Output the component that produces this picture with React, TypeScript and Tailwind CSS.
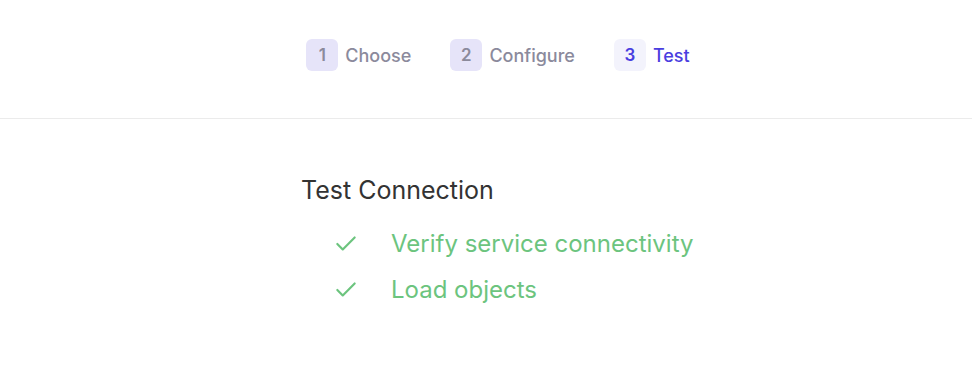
import { Check } from "lucide-react";

const steps = [
  { n: 1, label: "Choose", active: false },
  { n: 2, label: "Configure", active: false },
  { n: 3, label: "Test", active: true },
];

const tasks = ["Verify service connectivity", "Load objects"];

export default function App() {
  return (
    <div className="w-[972px] h-[374px] bg-white font-['Inter',sans-serif]">
      <div className="h-[119px] border-b border-[#ebebeb] flex justify-center pt-[39px] pl-[24px]">
        <div className="flex items-start gap-[39px]">
          {steps.map((s) => (
            <div key={s.n} className="flex items-center gap-[7px]">
              <span
                className={
                  s.active
                    ? "w-8 h-8 rounded-md flex items-center justify-center text-[17px] leading-none pt-[1px] font-semibold bg-[#f3f3fc] text-[#4a3ee0]"
                    : "w-8 h-8 rounded-md flex items-center justify-center text-[17px] leading-none pt-[1px] font-semibold bg-[#e6e4f9] text-[#8b8a9c]"
                }
              >
                {s.n}
              </span>
              <span
                className={
                  s.active
                    ? "text-[18px] font-medium text-[#4a3ee0]"
                    : "text-[18px] font-medium text-[#8b8a9c]"
                }
              >
                {s.label}
              </span>
            </div>
          ))}
        </div>
      </div>
      <div className="pl-[301px] pt-[56px]">
        <h2 className="text-[25px] font-normal text-[#333333] leading-[30px]">Test Connection</h2>
        <ul className="mt-[22px] flex flex-col gap-[12px] pl-[32px]">
          {tasks.map((t) => (
            <li key={t} className="flex items-center gap-[32px] text-[24px] text-[#6cc47e] leading-[34px]">
              <Check className="w-[26px] h-[26px]" strokeWidth={2} />
              <span>{t}</span>
            </li>
          ))}
        </ul>
      </div>
    </div>
  );
}
